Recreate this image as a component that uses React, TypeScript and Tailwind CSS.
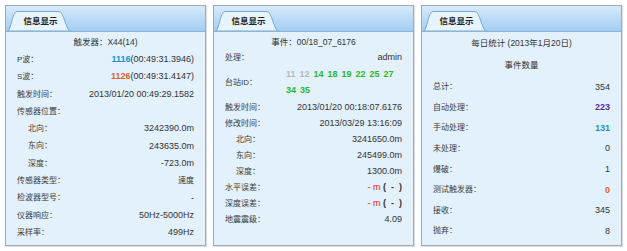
import React from "react";

type Row = { label: string; value: React.ReactNode; sub?: boolean };

function Header() {
  return (
    <div className="flex h-[26px] shrink-0 items-end border-b border-[#8fb5d6] bg-gradient-to-b from-[#d6eafb] to-[#a3cdf3] pl-[1px]">
      <div className="relative flex h-[20px] w-[64px] items-center justify-center">
        <svg className="absolute inset-0" width="64" height="20" viewBox="0 0 64 20">
          <path
            d="M0.5 20 C4 20 5 0.5 10 0.5 L52 0.5 C57 0.5 59 20 63.5 20 Z"
            fill="#e8f4fd"
            stroke="#7fa7c9"
            strokeWidth="1"
          />
        </svg>
        <span className="relative pl-[3px] text-[8.5px] font-bold text-[#222]">信息显示</span>
      </div>
    </div>
  );
}

function Panel({ children }: { children: React.ReactNode }) {
  return (
    <div className="flex h-[241px] w-[201px] flex-col border border-[#9ea9b4] bg-[#e3f1fc] shadow-[1px_1px_1px_rgba(0,0,0,0.12)]">
      <Header />
      {children}
    </div>
  );
}

function Line({ label, value, sub, h }: Row & { h: string }) {
  return (
    <div className={`flex items-center justify-between ${h}`}>
      <span className={`text-[8px] text-[#3a3a3a] ${sub ? "pl-[11px]" : ""}`}>{label}</span>
      <span>{value}</span>
    </div>
  );
}

const blue = "font-bold text-[#1b93cf]";
const orange = "font-bold text-[#e0621c]";

export default function App() {
  const rows1: Row[] = [
    { label: "P波：", value: <><span className={blue}>1116</span>(00:49:31.3946)</> },
    { label: "S波：", value: <><span className={orange}>1126</span>(00:49:31.4147)</> },
    { label: "触发时间：", value: "2013/01/20 00:49:29.1582" },
    { label: "传感器位置：", value: "" },
    { label: "北向：", value: "3242390.0m", sub: true },
    { label: "东向：", value: "243635.0m", sub: true },
    { label: "深度：", value: "-723.0m", sub: true },
    { label: "传感器类型：", value: <span className="text-[8px]">速度</span> },
    { label: "检波器型号：", value: "-" },
    { label: "仪器响应：", value: "50Hz-5000Hz" },
    { label: "采样率：", value: "499Hz" },
  ];

  const errorValue = (
    <>
      <span className="text-[#d42020]">-</span> <span className="text-[#d42020]">m</span>{" "}
      <span className="font-bold">(&nbsp;&nbsp;-&nbsp;&nbsp;)</span>
    </>
  );

  const rows2: Row[] = [
    { label: "触发时间：", value: "2013/01/20 00:18:07.6176" },
    { label: "修改时间：", value: "2013/03/29 13:16:09" },
    { label: "北向：", value: "3241650.0m", sub: true },
    { label: "东向：", value: "245499.0m", sub: true },
    { label: "深度：", value: "1300.0m", sub: true },
    { label: "水平误差：", value: errorValue },
    { label: "深度误差：", value: errorValue },
    { label: "地震震级：", value: "4.09" },
  ];

  const stations = [
    { id: "11", on: false },
    { id: "12", on: false },
    { id: "14", on: true },
    { id: "18", on: true },
    { id: "19", on: true },
    { id: "22", on: true },
    { id: "25", on: true },
    { id: "27", on: true },
    { id: "34", on: true },
    { id: "35", on: true },
  ];

  const rows3: Row[] = [
    { label: "总计：", value: "354" },
    { label: "自动处理：", value: <span className="font-bold text-[#5b2aa6]">223</span> },
    { label: "手动处理：", value: <span className={blue}>131</span> },
    { label: "未处理：", value: "0" },
    { label: "爆破：", value: "1" },
    { label: "测试触发器：", value: <span className={orange}>0</span> },
    { label: "接收：", value: "345" },
    { label: "抛弃：", value: "8" },
  ];

  return (
    <div
      className="flex h-[251px] w-[627px] gap-[7px] bg-white px-[5px] pt-[5px] text-[9px] text-[#333]"
      style={{ fontFamily: '"Liberation Sans", "Noto Sans CJK SC", sans-serif' }}
    >
      <Panel>
        <div className="flex flex-col px-[11px] pt-[2px]">
          <div className="flex h-[17.3px] items-center justify-center text-[8.5px]">触发器：X44(14)</div>
          {rows1.map((r) => (
            <Line key={r.label} {...r} h="h-[17.3px]" />
          ))}
        </div>
      </Panel>

      <Panel>
        <div className="flex flex-col px-[11px] pt-[2px]">
          <div className="flex h-[16px] items-center justify-center text-[8.5px]">事件：00/18_07_6176</div>
          <Line label="处理：" value="admin" h="h-[16px]" />
          <div className="flex items-center justify-between py-[1px]">
            <span className="text-[8px] text-[#3a3a3a]">台站ID：</span>
            <div className="flex w-[116px] flex-wrap gap-x-[4px]">
              {stations.map((s) => (
                <span
                  key={s.id}
                  className={`flex h-[16px] items-center font-bold ${s.on ? "text-[#2bb52b]" : "text-[#b4b8bb]"}`}
                >
                  {s.id}
                </span>
              ))}
            </div>
          </div>
          {rows2.map((r) => (
            <Line key={r.label} {...r} h="h-[16px]" />
          ))}
        </div>
      </Panel>

      <Panel>
        <div className="flex flex-col px-[11px] pt-[1px]">
          <div className="flex h-[20px] items-center justify-center text-[8.5px]">每日统计 (2013年1月20日)</div>
          <div className="flex h-[24px] items-center justify-center text-[8.5px]">事件数量</div>
          {rows3.map((r) => (
            <Line key={r.label} {...r} h="h-[20.6px]" />
          ))}
        </div>
      </Panel>
    </div>
  );
}
